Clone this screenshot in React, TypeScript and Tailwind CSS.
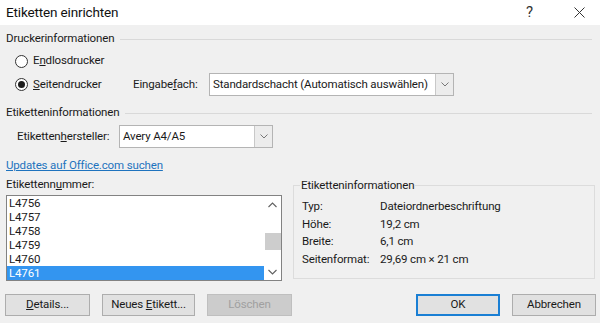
import React from "react";

const items = ["L4756", "L4757", "L4758", "L4759", "L4760", "L4761"];

function Chevron({ up = false }: { up?: boolean }) {
  return (
    <svg width="9" height="6" viewBox="0 0 9 6" className="block">
      <path
        d={up ? "M0.5 5 L4.5 1 L8.5 5" : "M0.5 1 L4.5 5 L8.5 1"}
        fill="none"
        stroke="#606060"
        strokeWidth="1.1"
      />
    </svg>
  );
}

function Select({ value, width }: { value: string; width: string }) {
  return (
    <div className={`flex h-[23px] shrink-0 items-stretch border border-[#b4b4b4] bg-white ${width}`}>
      <div className="flex flex-1 items-center whitespace-nowrap pl-[3px] text-[#1a1a1a]">
        {value}
      </div>
      <div className="flex w-[18px] items-center justify-center border-l border-[#c8c8c8] bg-[#ececec]">
        <svg width="8" height="5" viewBox="0 0 8 5">
          <path d="M0.5 0.5 L4 4 L7.5 0.5" fill="none" stroke="#777" strokeWidth="1" />
        </svg>
      </div>
    </div>
  );
}

function Radio({ checked }: { checked?: boolean }) {
  return (
    <div className="flex h-[13px] w-[13px] shrink-0 items-center justify-center rounded-full border border-[#333] bg-white">
      {checked && <div className="h-[7px] w-[7px] rounded-full bg-[#1e1e1e]" />}
    </div>
  );
}

function Btn({
  children,
  width,
  disabled,
  primary,
}: {
  children: React.ReactNode;
  width: string;
  disabled?: boolean;
  primary?: boolean;
}) {
  return (
    <div
      className={`flex h-[22px] items-center justify-center whitespace-nowrap ${width} ${
        disabled
          ? "border border-[#bfbfbf] bg-[#cccccc] text-[#a0a0a0]"
          : primary
          ? "border-2 border-[#1a7fd4] bg-[#e1e1e1] text-[#1a1a1a]"
          : "border border-[#adadad] bg-[#e1e1e1] text-[#1a1a1a]"
      }`}
    >
      <span>{children}</span>
    </div>
  );
}

function Header({ title }: { title: string }) {
  return (
    <div className="flex h-[16px] items-center pl-[6px] text-[#1a1a1a]">
      <span className="whitespace-nowrap">{title}</span>
      <div className="ml-[6px] mr-[8px] h-px flex-1 bg-[#d9d9d9]" />
    </div>
  );
}

export default function App() {
  return (
    <div
      className="h-[323px] w-[600px] overflow-hidden bg-[#f0f0f0] text-[11.5px] tracking-[-0.15px] text-[#1a1a1a]"
      style={{ fontFamily: 'Roboto, "Noto Sans", sans-serif' }}
    >
      {/* title bar */}
      <div className="flex h-[25px] items-center bg-white pl-[6px]">
        <span className="text-[13.5px] text-[#111]">Etiketten einrichten</span>
        <span className="ml-auto mr-[41px] text-[15px] text-[#333]">?</span>
        <svg width="11" height="11" viewBox="0 0 11 11" className="mr-[15px]">
          <path d="M0.5 0.5 L10.5 10.5 M10.5 0.5 L0.5 10.5" stroke="#333" strokeWidth="1" />
        </svg>
      </div>

      <div className="mt-[6px]">
        <Header title="Druckerinformationen" />
      </div>

      <div className="mt-[4px] flex h-[20px] items-center pl-[15px]">
        <Radio />
        <span className="ml-[5px]">
          E<span className="underline">n</span>dlosdrucker
        </span>
      </div>

      <div className="mt-[2px] flex h-[23px] items-center pl-[15px]">
        <Radio checked />
        <span className="ml-[5px] w-[100px] whitespace-nowrap">
          <span className="underline">S</span>eitendrucker
        </span>
        <span className="w-[76px] whitespace-nowrap">
          Eingabe<span className="underline">f</span>ach:
        </span>
        <Select value="Standardschacht (Automatisch auswählen)" width="w-[245px]" />
      </div>

      <div className="mt-[9px]">
        <Header title="Etiketteninformationen" />
      </div>

      <div className="mt-[4px] flex h-[23px] items-center pl-[17px]">
        <span className="w-[102px] whitespace-nowrap">
          Etiketten<span className="underline">h</span>ersteller:
        </span>
        <Select value="Avery A4/A5" width="w-[154px]" />
      </div>

      <div className="mt-[10px] flex h-[16px] items-center pl-[6px] text-[#1e73be] underline">
        Updates auf Office.com suchen
      </div>

      <div className="mt-[3px] flex pl-[6px]">
        <div className="flex w-[276px] flex-col">
          <div className="flex h-[16px] items-center">
            <span>
              Etikettenn<span className="underline">u</span>mmer:
            </span>
          </div>
          <div className="mt-[2px] flex h-[86px] border border-[#828282] bg-white">
            <div className="flex flex-1 flex-col">
              {items.map((it, i) => (
                <div
                  key={it}
                  className={`flex h-[14px] items-center pl-[2px] leading-[14px] ${
                    i === items.length - 1 ? "bg-[#3395f0] text-white" : "text-[#1a1a1a]"
                  }`}
                >
                  {it}
                </div>
              ))}
            </div>
            <div className="flex w-[17px] flex-col items-center bg-white">
              <div className="flex h-[17px] items-center justify-center">
                <Chevron up />
              </div>
              <div className="mt-[20px] h-[17px] w-[16px] bg-[#cdcdcd]" />
              <div className="mt-auto flex h-[17px] items-center justify-center">
                <Chevron />
              </div>
            </div>
          </div>
        </div>

        <div className="relative ml-[11px] mt-[8px] h-[94px] w-[302px] border border-[#dcdcdc]">
          <div className="absolute -top-[9px] left-[6px] bg-[#f0f0f0] px-px">
            Etiketteninformationen
          </div>
          <div className="mt-[12px] grid grid-cols-[78px_1fr] pl-[8px] leading-[17.5px]">
            <span>Typ:</span>
            <span>Dateiordnerbeschriftung</span>
            <span>Höhe:</span>
            <span>19,2 cm</span>
            <span>Breite:</span>
            <span>6,1 cm</span>
            <span>Seitenformat:</span>
            <span>29,69 cm × 21 cm</span>
          </div>
        </div>
      </div>

      <div className="mt-[13px] flex pl-[5px]">
        <Btn width="w-[85px]">
          <span className="underline">D</span>etails...
        </Btn>
        <div className="ml-[12px]">
          <Btn width="w-[93px]">
            Neues <span className="underline">E</span>tikett...
          </Btn>
        </div>
        <div className="ml-[12px]">
          <Btn width="w-[85px]" disabled>
            Löschen
          </Btn>
        </div>
        <div className="ml-auto">
          <Btn width="w-[84px]" primary>
            OK
          </Btn>
        </div>
        <div className="ml-[12px] mr-[4px]">
          <Btn width="w-[84px]">Abbrechen</Btn>
        </div>
      </div>
    </div>
  );
}
